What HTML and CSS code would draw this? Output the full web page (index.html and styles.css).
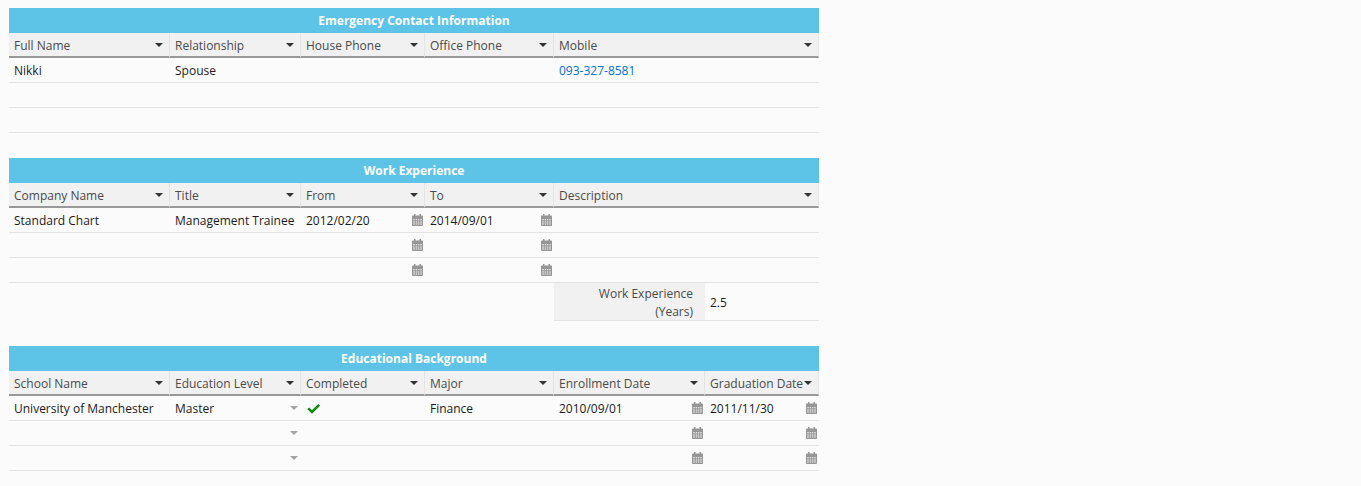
FILE: index.html
```html
<!DOCTYPE html>
<html lang="en">
<head>
<meta charset="utf-8">
<title>Employee Background</title>
<link rel="stylesheet" href="styles.css">
</head>
<body>
<svg class="defs" width="0" height="0" aria-hidden="true">
  <symbol id="cal" viewBox="0 0 11 12">
    <path fill-rule="evenodd" d="M2 0h1.500v1.500h4V0H9v1.500h1.200q.8 0 .8.8V11.200q0 .8-.8.8H.8q-.8 0-.8-.8V2.300q0-.8.8-.8H2zM1.200 5.200v1h1.600v-1zm2.500 0v1h1.400v-1zm2.200 0v1h1.400v-1zm2.300 0v1h1.600v-1zM1.200 7.400v1h1.600v-1zm2.500 0v1h1.400v-1zm2.200 0v1h1.400v-1zm2.300 0v1h1.600v-1zM1.200 9.600v1h1.600v-1zm2.500 0v1h1.400v-1zm2.200 0v1h1.400v-1zm2.300 0v1h1.600v-1z"/>
  </symbol>
</svg>

<main class="page">
  <table class="sheet">
    <colgroup><col class="c1"><col class="c2"><col class="c3"><col class="c4"><col class="c5"><col class="c6"></colgroup>
    <thead>
      <tr><th class="title" colspan="6">Emergency Contact Information</th></tr>
      <tr class="heads">
        <th>Full Name</th><th>Relationship</th><th>House Phone</th><th>Office Phone</th><th colspan="2">Mobile</th>
      </tr>
    </thead>
    <tbody>
      <tr><td>Nikki</td><td>Spouse</td><td></td><td></td><td colspan="2"><a class="link" href="#">093-327-8581</a></td></tr>
      <tr><td></td><td></td><td></td><td></td><td colspan="2"></td></tr>
      <tr><td></td><td></td><td></td><td></td><td colspan="2"></td></tr>
    </tbody>
  </table>

  <table class="sheet">
    <colgroup><col class="c1"><col class="c2"><col class="c3"><col class="c4"><col class="c5"><col class="c6"></colgroup>
    <thead>
      <tr><th class="title" colspan="6">Work Experience</th></tr>
      <tr class="heads">
        <th>Company Name</th><th>Title</th><th>From</th><th>To</th><th colspan="2">Description</th>
      </tr>
    </thead>
    <tbody>
      <tr><td>Standard Chart</td><td>Management Trainee</td>
        <td class="date">2012/02/20<svg class="cal"><use href="#cal"/></svg></td>
        <td class="date">2014/09/01<svg class="cal"><use href="#cal"/></svg></td><td colspan="2"></td></tr>
      <tr><td></td><td></td>
        <td class="date"><svg class="cal"><use href="#cal"/></svg></td>
        <td class="date"><svg class="cal"><use href="#cal"/></svg></td><td colspan="2"></td></tr>
      <tr><td></td><td></td>
        <td class="date"><svg class="cal"><use href="#cal"/></svg></td>
        <td class="date"><svg class="cal"><use href="#cal"/></svg></td><td colspan="2"></td></tr>
      <tr class="summary"><td class="blank" colspan="4"></td><td class="label">Work Experience (Years)</td><td class="value">2.5</td></tr>
    </tbody>
  </table>

  <table class="sheet">
    <colgroup><col class="c1"><col class="c2"><col class="c3"><col class="c4"><col class="c5"><col class="c6"></colgroup>
    <thead>
      <tr><th class="title" colspan="6">Educational Background</th></tr>
      <tr class="heads">
        <th>School Name</th><th>Education Level</th><th>Completed</th><th>Major</th><th>Enrollment Date</th><th>Graduation Date</th>
      </tr>
    </thead>
    <tbody>
      <tr><td>University of Manchester</td><td class="select">Master</td>
        <td class="check"><svg class="tick" viewBox="0 0 14 11"><path d="M1.300 5.400 5 9 12.200 1.800"/></svg></td>
        <td>Finance</td>
        <td class="date">2010/09/01<svg class="cal"><use href="#cal"/></svg></td>
        <td class="date">2011/11/30<svg class="cal"><use href="#cal"/></svg></td></tr>
      <tr><td></td><td class="select"></td><td></td><td></td>
        <td class="date"><svg class="cal"><use href="#cal"/></svg></td>
        <td class="date"><svg class="cal"><use href="#cal"/></svg></td></tr>
      <tr><td></td><td class="select"></td><td></td><td></td>
        <td class="date"><svg class="cal"><use href="#cal"/></svg></td>
        <td class="date"><svg class="cal"><use href="#cal"/></svg></td></tr>
    </tbody>
  </table>
</main>
</body>
</html>
```

FILE: styles.css
```css
* { box-sizing: border-box; }

html, body { height: 100%; }

body {
  margin: 0;
  padding: 8px 0 0 9px;
  background: #fbfbfb;
  color: #1a1a1a;
  font: 12px/17px "Open Sans", "Liberation Sans", sans-serif;
  overflow: hidden;
}

.defs { display: block; height: 0; }

.page {
  display: flex;
  flex-direction: column;
  gap: 25px;
  width: 810px;
}

.sheet {
  width: 810px;
  table-layout: fixed;
  border-collapse: separate;
  border-spacing: 0;
}

.c1 { width: 161px; }
.c2 { width: 131px; }
.c3 { width: 124px; }
.c4 { width: 129px; }
.c5 { width: 151px; }
.c6 { width: 114px; }

th, td { padding: 0 5px; overflow: visible; white-space: nowrap; }

.title {
  height: 25px;
  padding: 0;
  background: #5dc3e7;
  color: #fff;
  font-weight: 700;
  text-align: center;
}

.heads th {
  position: relative;
  height: 25px;
  padding-top: 2px;
  background: #f1f1f1;
  color: #4a4a4a;
  font-weight: 400;
  text-align: left;
  border-bottom: 2px solid #999;
  border-right: 1px solid #e4e4e4;
}

.heads th::after {
  content: "";
  position: absolute;
  top: 10px;
  right: 6px;
  border-style: solid;
  border-width: 4px 4px 0;
  border-color: #333 transparent transparent;
}

td {
  height: 25px;
  border-bottom: 1px solid #e3e3e3;
}

.link { color: #0070d2; text-decoration: none; }

.date, .select { position: relative; }

.cal {
  position: absolute;
  top: 5.5px;
  right: 2px;
  width: 11px;
  height: 12px;
  fill: #969696;
}

.select::after {
  content: "";
  position: absolute;
  top: 10px;
  right: 3px;
  border-style: solid;
  border-width: 4px 4px 0;
  border-color: #a3a3a3 transparent transparent;
}

.tick {
  display: block;
  width: 14px;
  height: 11px;
  margin-left: 1px;
  fill: none;
  stroke: #0f8c0f;
  stroke-width: 2.600;
}

.summary td { height: 38px; }

.blank { border-bottom: 0; }

.label {
  background: #f1f1f1;
  color: #4a4a4a;
  line-height: 17.500px;
  text-align: right;
  white-space: normal;
  padding: 2px 12px 0 40px;
}

.value { padding: 2px 5px 0; }
```
